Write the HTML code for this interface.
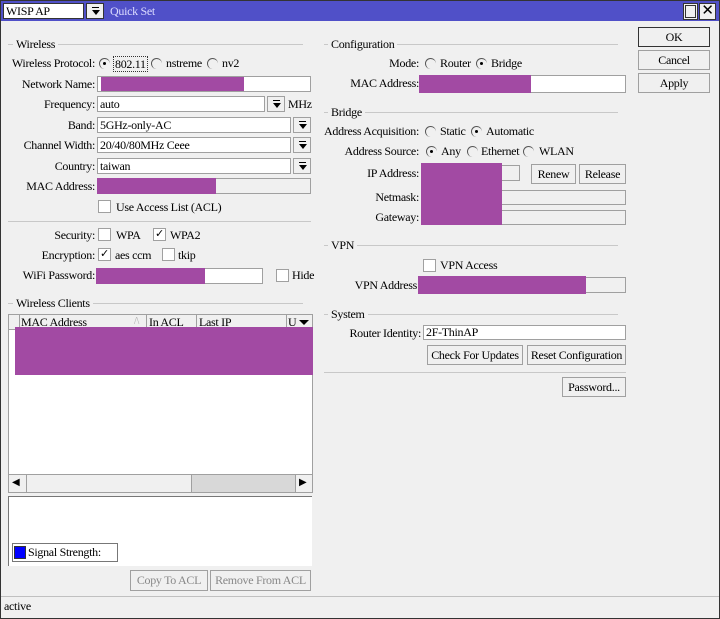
<!DOCTYPE html>
<html><head><meta charset="utf-8"><style>
*{margin:0;padding:0;box-sizing:border-box}
body{width:720px;height:619px;background:#f0f0f0;font-family:"Liberation Serif",serif;font-size:12px;color:#000;position:relative;overflow:hidden;letter-spacing:-0.3px}
.a{position:absolute;white-space:nowrap}
.t{position:absolute;white-space:nowrap;line-height:14px}
.r{text-align:right}
.f{position:absolute;background:#fff;border:1px solid #a0a0a0;line-height:14px;padding-left:2px}
.g{position:absolute;background:#f0f0f0;border:1px solid #a0a0a0}
.p{position:absolute;background:#a24aa3}
.btn{position:absolute;background:#f0f0f0;border:1px solid #a0a0a0;text-align:center;line-height:18px}
.dd{position:absolute;background:#f0f0f0;border:1px solid #a0a0a0;width:18px;height:15px}
.dd::before{content:"";position:absolute;left:5px;top:3px;width:7px;height:1px;background:#000}
.dd::after{content:"";position:absolute;left:5px;top:6px;border-left:4px solid transparent;border-right:4px solid transparent;border-top:5px solid #000;margin-left:-0.5px}
.cb{position:absolute;width:13px;height:13px;background:#fff;border:1px solid #a0a0a0;font-size:11px;line-height:11px;text-align:center}
.rd{position:absolute;width:11px;height:11px;border-radius:50%;border-left:1px solid #555;border-top:1px solid #555;background:#f0f0f0}
.rd.on::after{content:"";position:absolute;left:3px;top:3px;width:3px;height:3px;background:#000;border-radius:50%}
.lg{position:absolute;height:1px;background:#c8c8c8}
</style></head><body>
<div class="a" style="left:0;top:0;width:720px;height:619px;border:1px solid #333"></div>
<div class="a" style="left:1px;top:1px;width:718px;height:20px;background:#5050c8"></div>
<div class="f" style="left:3px;top:3px;width:81px;height:16px;border-color:#333">WISP AP</div>
<div class="dd" style="left:86px;top:3px;height:16px;border-color:#333"></div>
<div class="t" style="left:110px;top:4px;color:#dcdcff">Quick Set</div>
<div class="a" style="left:683px;top:3px;width:15px;height:17px;background:#f0f0f0;border:1px solid #333"><div class="a" style="left:1px;top:1px;width:11px;height:13px;border:1px solid #333"></div></div>
<div class="a" style="left:699px;top:3px;width:17px;height:17px;background:#f0f0f0;border:1px solid #333;font-family:'Liberation Sans',sans-serif;font-size:15px;line-height:14px;text-align:center">✕</div>

<div class="lg" style="left:8px;top:44px;width:295px"></div>
<div class="t" style="left:13px;top:37px;background:#f0f0f0;padding:0 3px">Wireless</div>
<div class="t r" style="left:0;width:95px;top:56px">Wireless Protocol:</div>
<div class="rd on" style="left:99px;top:58px"></div><div class="t" style="left:113px;top:56px;border:1px dotted #333;padding:0 1px">802.11</div>
<div class="rd" style="left:151px;top:58px"></div><div class="t" style="left:166px;top:56px">nstreme</div>
<div class="rd" style="left:207px;top:58px"></div><div class="t" style="left:222px;top:56px">nv2</div>

<div class="t r" style="left:0;width:95px;top:77px">Network Name:</div>
<div class="f" style="left:97px;top:76px;width:214px;height:16px"></div><div class="p" style="left:101px;top:77px;width:143px;height:14px"></div>

<div class="t r" style="left:0;width:95px;top:97px">Frequency:</div>
<div class="f" style="left:97px;top:96px;width:168px;height:16px">auto</div>
<div class="dd" style="left:267px;top:96px;height:16px"></div><div class="t" style="left:288px;top:97px">MHz</div>

<div class="t r" style="left:0;width:95px;top:118px">Band:</div>
<div class="f" style="left:97px;top:117px;width:194px;height:16px">5GHz-only-AC</div><div class="dd" style="left:293px;top:117px;height:16px"></div>
<div class="t r" style="left:0;width:95px;top:138px">Channel Width:</div>
<div class="f" style="left:97px;top:137px;width:194px;height:16px">20/40/80MHz Ceee</div><div class="dd" style="left:293px;top:137px;height:16px"></div>
<div class="t r" style="left:0;width:95px;top:159px">Country:</div>
<div class="f" style="left:97px;top:158px;width:194px;height:16px">taiwan</div><div class="dd" style="left:293px;top:158px;height:16px"></div>
<div class="t r" style="left:0;width:95px;top:179px">MAC Address:</div>
<div class="g" style="left:97px;top:178px;width:214px;height:16px"></div><div class="p" style="left:97px;top:178px;width:119px;height:16px"></div>
<div class="cb" style="left:98px;top:200px"></div><div class="t" style="left:116px;top:200px">Use Access List (ACL)</div>

<div class="lg" style="left:8px;top:221px;width:303px"></div>
<div class="t r" style="left:0;width:95px;top:228px">Security:</div>
<div class="cb" style="left:98px;top:228px"></div><div class="t" style="left:116px;top:228px">WPA</div>
<div class="cb" style="left:153px;top:228px">✓</div><div class="t" style="left:170px;top:228px">WPA2</div>
<div class="t r" style="left:0;width:95px;top:248px">Encryption:</div>
<div class="cb" style="left:98px;top:248px">✓</div><div class="t" style="left:115px;top:248px">aes ccm</div>
<div class="cb" style="left:162px;top:248px"></div><div class="t" style="left:178px;top:248px">tkip</div>
<div class="t r" style="left:0;width:95px;top:268px">WiFi Password:</div>
<div class="f" style="left:96px;top:268px;width:167px;height:16px"></div><div class="p" style="left:96px;top:268px;width:109px;height:16px"></div>
<div class="cb" style="left:276px;top:269px"></div><div class="t" style="left:292px;top:268px">Hide</div>

<div class="lg" style="left:8px;top:303px;width:295px"></div>
<div class="t" style="left:13px;top:296px;background:#f0f0f0;padding:0 3px">Wireless Clients</div>
<div class="a" style="left:8px;top:314px;width:305px;height:179px;background:#fff;border:1px solid #a0a0a0"></div>
<div class="a" style="left:9px;top:315px;width:303px;height:15px;background:#f0f0f0;border-bottom:1px solid #a0a0a0"></div>
<div class="a" style="left:19px;top:315px;width:1px;height:15px;background:#a0a0a0"></div>
<div class="t" style="left:21px;top:315px">MAC Address</div><div class="t" style="left:134px;top:315px;color:#aaa;font-size:10px">/\</div>
<div class="a" style="left:146px;top:315px;width:1px;height:15px;background:#a0a0a0"></div><div class="t" style="left:149px;top:315px">In ACL</div>
<div class="a" style="left:196px;top:315px;width:1px;height:15px;background:#a0a0a0"></div><div class="t" style="left:199px;top:315px">Last IP</div>
<div class="a" style="left:286px;top:315px;width:1px;height:15px;background:#a0a0a0"></div><div class="t" style="left:288px;top:315px">U</div>
<div class="a" style="left:299px;top:320px;border-left:5px solid transparent;border-right:5px solid transparent;border-top:5px solid #000"></div>
<div class="p" style="left:15px;top:327px;width:298px;height:48px"></div>
<div class="a" style="left:9px;top:474px;width:303px;height:18px;background:#f0f0f0;border-top:1px solid #a0a0a0"></div>
<div class="a" style="left:191px;top:475px;width:104px;height:17px;background:#d8d8d8;border-left:1px solid #a0a0a0"></div>
<div class="a" style="left:26px;top:475px;width:1px;height:17px;background:#a0a0a0"></div>
<div class="a" style="left:295px;top:475px;width:1px;height:17px;background:#a0a0a0"></div>
<div class="t" style="left:12px;top:476px;font-size:10px">&#9664;</div><div class="t" style="left:299px;top:476px;font-size:10px">&#9654;</div>

<div class="a" style="left:8px;top:496px;width:304px;height:70px;background:#fff;border-top:1px solid #777;border-left:1px solid #777"></div>
<div class="a" style="left:12px;top:543px;width:106px;height:19px;background:#fff;border:1px solid #777"></div>
<div class="a" style="left:14px;top:546px;width:12px;height:13px;background:#0000ff;border:1px solid #333"></div>
<div class="t" style="left:28px;top:545px">Signal Strength:</div>
<div class="btn" style="left:130px;top:570px;width:78px;height:21px;color:#888">Copy To ACL</div>
<div class="btn" style="left:210px;top:570px;width:101px;height:21px;color:#888">Remove From ACL</div>

<div class="a" style="left:1px;top:596px;width:718px;height:1px;background:#c0c0c0"></div>
<div class="t" style="left:4px;top:599px">active</div>

<div class="lg" style="left:324px;top:44px;width:294px"></div>
<div class="t" style="left:328px;top:37px;background:#f0f0f0;padding:0 3px">Configuration</div>
<div class="t r" style="left:320px;width:99px;top:56px">Mode:</div>
<div class="rd" style="left:425px;top:58px"></div><div class="t" style="left:440px;top:56px">Router</div>
<div class="rd on" style="left:476px;top:58px"></div><div class="t" style="left:491px;top:56px">Bridge</div>
<div class="t r" style="left:320px;width:99px;top:76px">MAC Address:</div>
<div class="f" style="left:419px;top:75px;width:207px;height:18px"></div><div class="p" style="left:419px;top:75px;width:112px;height:18px"></div>

<div class="lg" style="left:324px;top:112px;width:294px"></div>
<div class="t" style="left:328px;top:105px;background:#f0f0f0;padding:0 3px">Bridge</div>
<div class="t r" style="left:320px;width:99px;top:124px">Address Acquisition:</div>
<div class="rd" style="left:425px;top:126px"></div><div class="t" style="left:440px;top:124px">Static</div>
<div class="rd on" style="left:471px;top:126px"></div><div class="t" style="left:486px;top:124px">Automatic</div>
<div class="t r" style="left:320px;width:99px;top:144px">Address Source:</div>
<div class="rd on" style="left:426px;top:146px"></div><div class="t" style="left:441px;top:144px">Any</div>
<div class="rd" style="left:467px;top:146px"></div><div class="t" style="left:481px;top:144px">Ethernet</div>
<div class="rd" style="left:523px;top:146px"></div><div class="t" style="left:539px;top:144px">WLAN</div>
<div class="t r" style="left:320px;width:99px;top:166px">IP Address:</div>
<div class="g" style="left:421px;top:165px;width:99px;height:16px"></div>
<div class="btn" style="left:531px;top:164px;width:45px;height:20px">Renew</div>
<div class="btn" style="left:579px;top:164px;width:47px;height:20px">Release</div>
<div class="t r" style="left:320px;width:99px;top:190px">Netmask:</div>
<div class="g" style="left:421px;top:190px;width:205px;height:15px"></div>
<div class="t r" style="left:320px;width:99px;top:210px">Gateway:</div>
<div class="g" style="left:421px;top:210px;width:205px;height:15px"></div>
<div class="p" style="left:421px;top:163px;width:81px;height:62px"></div>

<div class="lg" style="left:324px;top:245px;width:294px"></div>
<div class="t" style="left:328px;top:238px;background:#f0f0f0;padding:0 3px">VPN</div>
<div class="cb" style="left:423px;top:259px"></div><div class="t" style="left:440px;top:258px">VPN Access</div>
<div class="t r" style="left:320px;width:97px;top:278px">VPN Address</div>
<div class="g" style="left:418px;top:277px;width:208px;height:16px"></div><div class="p" style="left:418px;top:276px;width:168px;height:18px"></div>

<div class="lg" style="left:324px;top:314px;width:294px"></div>
<div class="t" style="left:328px;top:307px;background:#f0f0f0;padding:0 3px">System</div>
<div class="t r" style="left:320px;width:101px;top:326px">Router Identity:</div>
<div class="f" style="left:423px;top:325px;width:203px;height:15px;line-height:13px">2F-ThinAP</div>
<div class="btn" style="left:427px;top:345px;width:96px;height:20px">Check For Updates</div>
<div class="btn" style="left:527px;top:345px;width:99px;height:20px">Reset Configuration</div>
<div class="lg" style="left:324px;top:372px;width:302px"></div>
<div class="btn" style="left:562px;top:377px;width:64px;height:20px">Password...</div>

<div class="btn" style="left:638px;top:27px;width:72px;height:20px;border-color:#333">OK</div>
<div class="btn" style="left:638px;top:50px;width:72px;height:20px">Cancel</div>
<div class="btn" style="left:638px;top:73px;width:72px;height:20px">Apply</div>
</body></html>
